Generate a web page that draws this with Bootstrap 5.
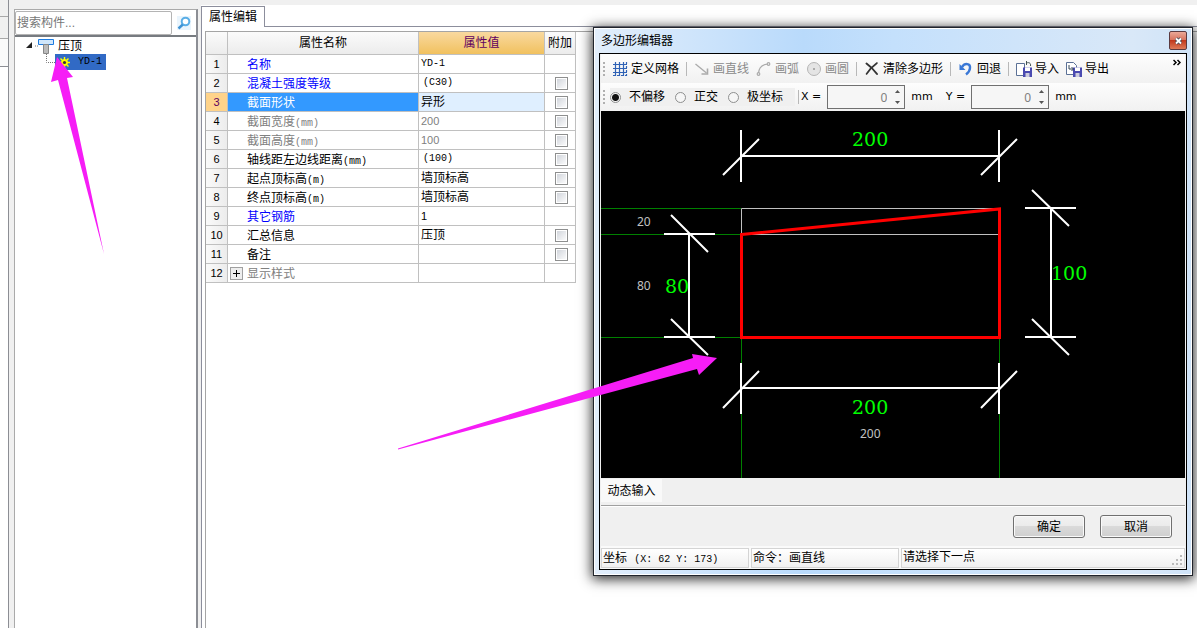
<!DOCTYPE html>
<html lang="zh-CN">
<head>
<meta charset="utf-8">
<meta name="viewport" content="width=device-width, initial-scale=1">
<title>属性编辑</title>
<link href="https://cdn.jsdelivr.net/npm/bootstrap@5.3.0/dist/css/bootstrap.min.css" rel="stylesheet">
<style>
body{font:12px/16px "Liberation Sans","Noto Sans CJK SC",sans-serif;color:#000;background:#fff;overflow:hidden}
button{font:inherit;color:inherit}
.mono{font-family:"Liberation Mono",monospace;font-size:10px}
span.mono{line-height:10px}
.app{height:100vh;background:#f0f0f0}
/* left side */
.gutter{width:9px;border-right:1px solid #8c8e94}
.gutter div{border-bottom:1px solid #a8a8a8}
.gutter .g1{height:17px}.gutter .g2{height:22px}
.gutter .g3{height:28px;background:#fafafa;border-color:#8c8e94}
.gutter .g4{background:#fff;border:0}
.side{width:184px;margin:9px 0 0 5px;border:1px solid #aaa;border-right:2px solid #8c8e94;border-bottom:0;background:#fff}
.search{height:27px;border-bottom:2px solid #777b80}
.search input{width:157px;height:24px;padding:0 1px;border:1px solid #b4b4b4;border-radius:2px;font-size:12px;color:#000}
.search input::placeholder{color:#777;opacity:1}
.search button,.bare{border:0;background:none;padding:0}
.tree{padding:1px 0 0 10px}
.tree ul{padding-left:20px}
.node{height:16px;line-height:16px}
.picked{background:#316ac5;padding:0 4px}
/* property page */
.page{margin-left:3px;padding-top:6px;border-top:0;background:linear-gradient(#f0f0f0 5px,#fff 5px)}
.tabrow{border-left:1px solid #8c8e9c}
.tabrow .tab{width:63px;height:21px;border:1px solid #8c8e9c;border-width:1px 1px 0 0;text-align:center;line-height:20px;padding:0}
.tabrow .rest{border-bottom:1px solid #8c8e9c}
.frame{border-left:1px solid #8c8e9c;padding:4px 0 0 3px}
.inner{border:1px solid #a5a5a5;border-width:1px 0 0 1px}
.props{width:370px;table-layout:fixed;border-collapse:separate;border-spacing:0}
.props th,.props td{border:solid #c0c0c0;border-width:0 1px 1px 0;padding:0 0 0 2px;height:19px;line-height:18px;font-weight:400;white-space:nowrap;overflow:hidden}
.props thead th{height:23px;background:linear-gradient(#fbfbfb,#ececec);text-align:center;padding:0}
.props thead .hot{background:linear-gradient(#f9d99f,#f1c15f);color:#600060}
.props tbody th{background:linear-gradient(90deg,#fafafa,#ececec);text-align:center;padding:0;font-size:11px}
.props .name{padding:2px 0 0 19px;line-height:16px;position:relative}
.props .num{font-size:11px}
.props .par{padding-left:4px}
.props .key{color:#00f}.props .off,.props .off+td{color:#808080}
.props .sel th{background:#ffd38a;color:#600060}
.props .sel .name{background:#39f;color:#fff}
.props .sel .val{background:#dfefff}
.tick{appearance:none;display:block;width:13px;height:13px;margin:0 auto;border:1px solid #8e8f8f;background:linear-gradient(135deg,#cdd1d8,#fff);box-shadow:inset 0 0 0 1px #fff}
.plus{position:absolute;left:2px;top:3px;width:13px;height:13px;border:1px solid #a0a0a0;background:#eee;display:grid;place-items:center}
/* dialog */
.dlg{position:absolute;top:27px;right:4px;width:600px;border:1px solid #20242c;padding:0 5px 5px;background:linear-gradient(90deg,#e2eefb,#b9dafb 35%,#c4e0fc 50%,#d9e8f8 90%,#cfe3f8);box-shadow:inset 0 0 0 1px #fff,0 2px 12px 1px rgba(0,0,0,.85)}
.ttl{height:25px;padding-left:2px}
.close{width:18px;height:19px;margin-top:3px;border:1px solid #5b3a40;border-radius:2px;padding:0;background:linear-gradient(#eba898,#d87560 45%,#c2381c 50%,#de7a58);display:grid;place-items:center}
.client{border:1px solid #000;padding:0 1px;background:#f0f0f0}
.bar{height:29px;padding-left:2px;gap:7px;background:linear-gradient(#fdfdfd,#f1f1f1)}
.bar+.bar{height:28px;gap:0}
.grip{width:2px;height:14px;background:repeating-linear-gradient(#b0b0b0 0 2px,transparent 2px 4px)}
.vr1{width:1px;height:14px;background:#b8b8b8}
.tool{border:0;background:none;padding:0;display:flex;align-items:center;gap:3px;white-space:nowrap}
.tool:disabled{color:#8a8a8a}
.opts{background:#f0f0f0;height:18px;width:185px;margin:0 3px 0 5px;gap:10px}
.opts label{display:flex;align-items:center;gap:8px;white-space:nowrap}
.opts input{appearance:none;width:11px;height:11px;margin:0;border:1px solid #8e8f8f;border-radius:50%;background:#f6f6f6}
.opts input:checked{background:radial-gradient(#111 0 3px,#f6f6f6 4px)}
.unit{font-family:"DejaVu Sans",sans-serif;font-size:11px;white-space:nowrap}
label.unit{padding:0 6px 0 2px}
span.unit{padding:0 11px 0 6px}
.spin{position:relative;width:78px}
.spin input{width:100%;height:24px;border:1px solid #707070;background:#f6f6f6;text-align:right;padding:0 17px 0 0;color:#808080;font:12px "Noto Sans",sans-serif}
.spin div{position:absolute;right:3px;top:3px;height:18px;display:flex;flex-direction:column;justify-content:space-between}
.spin button{border:0;background:none;padding:0;width:9px;height:7px;display:grid;place-items:center}
.canvas{display:block;width:100%;background:#000}
.canvas .big{font:19px "DejaVu Serif",serif;fill:#0f0}
.canvas .tiny{font:12px "Noto Sans",sans-serif;fill:#c0c0c0}
.dyn{height:28px;border-bottom:1px solid #a0a0a0;padding-top:1px}
.dyn .bare{width:61px;height:23px;background:#f9f9f9;padding-top:1px}
.foot{height:40px;gap:15px;padding-right:13px;border-top:1px solid #fff}
.foot .push{width:72px;height:23px;padding:0;border:1px solid #707070;border-radius:3px;box-shadow:inset 0 0 0 1px #fafafa;background:linear-gradient(#f2f2f2,#ebebeb 48%,#dadada 50%,#cfcfcf)}
.stat{gap:2px;padding-top:2px;background:#fafafa;height:23px}
.stat div{border:1px solid #d4d4d4;height:20px;line-height:19px;padding-left:1px;background:linear-gradient(#fff,#f0f0f0);white-space:nowrap}
.stat .c{width:148px}
.note{position:absolute;pointer-events:none;overflow:visible}
</style>
</head>
<body>
<div class="app d-flex position-relative">
  <div class="gutter d-flex flex-column flex-shrink-0"><div class="g1"></div><div class="g2"></div><div class="g3"></div><div class="g4 flex-grow-1"></div></div>

  <aside class="side flex-shrink-0">
    <form class="search d-flex align-items-center">
      <input type="text" placeholder="搜索构件..." aria-label="搜索构件">
      <button type="button" class="flex-grow-1 d-flex justify-content-center" aria-label="搜索">
        <svg width="14" height="14" viewBox="0 0 14 14" fill="none"><rect width="14" height="14" fill="#eaf5fd"/><circle cx="8.500" cy="5.500" r="3.800" stroke="#5aaee6" stroke-width="2" fill="#fff"/><path d="M5.800 8.500 1.500 12.500" stroke="#3f93d4" stroke-width="2.400"/></svg>
      </button>
    </form>
    <div class="tree position-relative">
      <div class="node d-flex align-items-center">
        <svg width="29" height="16" viewBox="0 0 29 16" class="me-1"><path d="M7 4v6H1z" fill="#222"/><path d="M10 8h3" stroke="#777" stroke-dasharray="1 1"/><path d="M13.500 1.500h15v5h-15z" fill="#cfe6fb" stroke="#1c7be0"/><path d="M18.500 6.500h5v9h-5z" fill="#bbb" stroke="#888"/></svg>
        <span>压顶</span>
      </div>
      <ul class="list-unstyled m-0 d-flex">
        <li class="node d-flex">
          <svg width="10" height="16" viewBox="0 0 10 16"><path d="M1.500 0v8.500H10" fill="none" stroke="#777" stroke-dasharray="1 1"/></svg>
          <span class="picked d-flex align-items-center gap-2"><svg width="11" height="11" viewBox="0 0 11 11" fill="none" stroke="#ff0"><path d="M5.500 0v11M0 5.500h11M1.500 1.500l8 8M9.500 1.500l-8 8" stroke-width="1.400"/><circle cx="5.500" cy="5.500" r="3" fill="#ff0"/><circle cx="5.500" cy="5.500" r="1.600" fill="#333" stroke="none"/></svg><span class="mono">YD-1</span></span>
        </li>
      </ul>
    </div>
  </aside>

  <main class="page flex-grow-1 d-flex flex-column">
    <div class="tabrow d-flex"><button class="bare tab" type="button">属性编辑</button><div class="rest flex-grow-1"></div></div>
    <div class="frame flex-grow-1 d-flex"><div class="inner flex-grow-1">
      <table class="props">
        <colgroup><col style="width:22px"><col style="width:191px"><col style="width:126px"><col style="width:31px"></colgroup>
        <thead><tr><th></th><th>属性名称</th><th class="hot">属性值</th><th>附加</th></tr></thead>
        <tbody>
          <tr><th>1</th><td class="name key">名称</td><td class="val mono">YD-1</td><td></td></tr>
          <tr><th>2</th><td class="name key">混凝土强度等级</td><td class="val mono par">(C30)</td><td><input type="checkbox" class="tick" aria-label="附加 2"></td></tr>
          <tr class="sel"><th>3</th><td class="name">截面形状</td><td class="val">异形</td><td><input type="checkbox" class="tick" aria-label="附加 3"></td></tr>
          <tr><th>4</th><td class="name off">截面宽度<span class="mono">(mm)</span></td><td class="num">200</td><td><input type="checkbox" class="tick" aria-label="附加 4"></td></tr>
          <tr><th>5</th><td class="name off">截面高度<span class="mono">(mm)</span></td><td class="num">100</td><td><input type="checkbox" class="tick" aria-label="附加 5"></td></tr>
          <tr><th>6</th><td class="name">轴线距左边线距离<span class="mono">(mm)</span></td><td class="mono par">(100)</td><td><input type="checkbox" class="tick" aria-label="附加 6"></td></tr>
          <tr><th>7</th><td class="name">起点顶标高<span class="mono">(m)</span></td><td>墙顶标高</td><td><input type="checkbox" class="tick" aria-label="附加 7"></td></tr>
          <tr><th>8</th><td class="name">终点顶标高<span class="mono">(m)</span></td><td>墙顶标高</td><td><input type="checkbox" class="tick" aria-label="附加 8"></td></tr>
          <tr><th>9</th><td class="name key">其它钢筋</td><td class="num">1</td><td></td></tr>
          <tr><th>10</th><td class="name">汇总信息</td><td>压顶</td><td><input type="checkbox" class="tick" aria-label="附加 10"></td></tr>
          <tr><th>11</th><td class="name">备注</td><td></td><td><input type="checkbox" class="tick" aria-label="附加 11"></td></tr>
          <tr><th>12</th><td class="name off"><button type="button" class="plus p-0" aria-label="展开"><svg width="7" height="7" viewBox="0 0 7 7"><path d="M3.500 0v7M0 3.500h7" stroke="#000"/></svg></button>显示样式</td><td></td><td></td></tr>
        </tbody>
      </table>
    </div></div>
  </main>

  <section class="dlg" role="dialog" aria-label="多边形编辑器">
    <div class="ttl d-flex justify-content-between"><span class="align-self-center">多边形编辑器</span>
      <button type="button" class="close" aria-label="关闭"><svg width="9" height="8" viewBox="0 0 9 8"><path d="M2 1.500l5 5M7 1.500l-5 5" stroke="#444a58" stroke-width="3.400"/><path d="M2 1.500l5 5M7 1.500l-5 5" stroke="#fff" stroke-width="1.800"/></svg></button></div>
    <div class="client">
      <div class="bar d-flex align-items-center">
        <span class="grip"></span>
        <button class="tool" type="button"><svg width="16" height="16" viewBox="0 0 16 16" fill="none" stroke="#2f62b5" stroke-width="1.200"><path d="M3.500 1v14M7.500 1v14M11.500 1v14M1 3.500h14M1 7.500h14M1 11.500h14"/><path d="M14.500 1v14M1 14.500h14" stroke-dasharray="2 2"/></svg>定义网格</button>
        <span class="vr1"></span>
        <button class="tool" type="button" disabled><svg width="16" height="16" viewBox="0 0 16 16" fill="none" stroke="#aaa" stroke-width="1.300"><path d="M1.500 3l11 9"/><path d="M13.500 7.500v5.500H7.500" stroke-width="1.600"/></svg>画直线</button>
        <button class="tool" type="button" disabled><svg width="16" height="16" viewBox="0 0 16 16" fill="none" stroke="#aaa" stroke-width="1.200"><path d="M2.500 12C3 7 6 3.500 12 3"/><circle cx="2.500" cy="13" r="1.300"/><circle cx="12.500" cy="3" r="1.300"/></svg>画弧</button>
        <button class="tool" type="button" disabled><svg width="16" height="16" viewBox="0 0 16 16"><circle cx="8" cy="8" r="6.500" fill="#e4e4e4" stroke="#b5b5b5"/><circle cx="8" cy="8" r="1" fill="#999"/></svg>画圆</button>
        <span class="vr1"></span>
        <button class="tool" type="button"><svg width="16" height="16" viewBox="0 0 16 16" fill="none" stroke="#333" stroke-linecap="round"><path d="M2.500 2.500C6 5 10 9 13 13" stroke-width="2"/><path d="M13 2C9 5 5 9 2.500 13" stroke-width="1.600"/></svg>清除多边形</button>
        <span class="vr1"></span>
        <button class="tool" type="button"><svg width="16" height="16" viewBox="0 0 16 16" fill="none"><path d="M4 6C7 1.500 12.500 2.500 12 7c-.2 3-2 5-4 6.500" stroke="#3a78d6" stroke-width="2.400"/><path d="M1.500 3v6h6z" fill="#3a78d6"/></svg>回退</button>
        <span class="vr1"></span>
        <button class="tool" type="button"><svg width="16" height="16" viewBox="0 0 16 16" fill="none"><path d="M.5 2.500h8v12h-8z" fill="#fff" stroke="#5b7196"/><path d="M7 6.500h9V16H7z" fill="#4a4ab0"/><path d="M9 6.500h5V10H9z" fill="#fff"/><path d="M9.500 12h4v4h-4z" fill="#ccd"/><path d="M14.500 5c.5-3-1.500-4-4-3M10.500 0v4" stroke="#455"/></svg>导入</button>
        <button class="tool" type="button"><svg width="16" height="16" viewBox="0 0 16 16" fill="none"><path d="M.5 1.500h7l3 3v9H.5z" fill="#fff" stroke="#5b7196"/><path d="M7 6.500h9V16H7z" fill="#4a4ab0"/><path d="M9 6.500h5V10H9z" fill="#fff"/><path d="M9.500 12h4v4h-4z" fill="#ccd"/><path d="M3 4v4h4M5.500 6l2 2-2 2" stroke="#345"/></svg>导出</button>
        <button class="bare ms-auto me-1 align-self-start" type="button" aria-label="更多"><svg width="8" height="7" viewBox="0 0 8 7" fill="none" stroke="#000" stroke-width="1.500"><path d="M.5 1l2.500 2.500L.5 6M4.500 1 7 3.500 4.500 6"/></svg></button>
      </div>
      <div class="bar d-flex align-items-center">
        <span class="grip"></span>
        <div class="opts d-flex align-items-center">
          <label><input type="radio" name="mode" checked>不偏移</label>
          <label><input type="radio" name="mode">正交</label>
          <label><input type="radio" name="mode">极坐标</label>
        </div>
        <span class="vr1"></span>
        <label class="unit" for="dx">X =</label>
        <div class="spin"><input id="dx" value="0"><div><button type="button" aria-label="X 增加"><svg width="5" height="3" viewBox="0 0 5 3"><path d="M0 3h5L2.500 0z" fill="#555"/></svg></button><button type="button" aria-label="X 减少"><svg width="5" height="3" viewBox="0 0 5 3"><path d="M0 0h5L2.500 3z" fill="#555"/></svg></button></div></div>
        <span class="unit">mm</span>
        <label class="unit" for="dy">Y =</label>
        <div class="spin"><input id="dy" value="0"><div><button type="button" aria-label="Y 增加"><svg width="5" height="3" viewBox="0 0 5 3"><path d="M0 3h5L2.500 0z" fill="#555"/></svg></button><button type="button" aria-label="Y 减少"><svg width="5" height="3" viewBox="0 0 5 3"><path d="M0 0h5L2.500 3z" fill="#555"/></svg></button></div></div>
        <span class="unit">mm</span>
      </div>
      <svg class="canvas" viewBox="0 0 584 367" fill="none">
        <g stroke="#008000"><path d="M0 97.500h140M0 123.500h140M0 226.500h140"/><path d="M140.500 228v139M398.500 228v139"/></g>
        <path d="M140.500 123V97.500H398M140 123.500h258" stroke="#c0c0c0"/>
        <path d="M140.500 123.500 398.500 98v128.500h-258z" stroke="#f00" stroke-width="3"/>
        <g stroke="#fff" stroke-width="2">
          <path d="M140 45h258M140 19v52M398 19v52M122 64l36-36M380 64l36-36"/>
          <path d="M140 277h258M140 252v51M398 252v51M122 297l36-37M380 297l36-37"/>
          <path d="M88 123v103M63 123h51M63 226h51M70 104l37 37M70 208l37 36"/>
          <path d="M450 97v129M424 97h51M424 226h51M431 79l37 36M431 208l37 36"/>
        </g>
        <text class="big" x="251" y="35">200</text><text class="big" x="251" y="303">200</text>
        <text class="big" x="64" y="182">80</text><text class="big" x="450" y="169">100</text>
        <text class="tiny" x="36" y="115">20</text><text class="tiny" x="36" y="179">80</text><text class="tiny" x="259" y="327">200</text>
      </svg>
      <div class="dyn"><button type="button" class="bare">动态输入</button></div>
      <div class="foot d-flex align-items-center justify-content-end"><button type="button" class="push">确定</button><button type="button" class="push">取消</button></div>
      <div class="stat d-flex">
        <div class="c">坐标 <span class="mono ms-1">(X: 62 Y: 173)</span></div><div class="c">命令：画直线</div>
        <div class="flex-grow-1 d-flex justify-content-between align-items-end">请选择下一点<svg width="12" height="12" viewBox="0 0 12 12" fill="#bbb"><path d="M8 0h2v2H8zM4 4h2v2H4zM8 4h2v2H8zM0 8h2v2H0zM4 8h2v2H4zM8 8h2v2H8z"/></svg></div>
      </div>
    </div>
    <svg class="note" style="left:-196px;top:325px" width="320" height="97" viewBox="0 0 320 97"><path d="M0 95.500 295 5 294 1l25 4-18 17-2-6L0 96.500z" fill="#f61df6"/></svg>
  </section>

  <svg class="note" style="left:50px;top:57px" width="54" height="197" viewBox="0 0 54 197"><path d="M54 197 8 23l-7 2L7 0l16 20-6 1z" fill="#f61df6"/></svg>
</div>
<script src="https://cdn.jsdelivr.net/npm/bootstrap@5.3.0/dist/js/bootstrap.bundle.min.js"></script>
</body>
</html>
